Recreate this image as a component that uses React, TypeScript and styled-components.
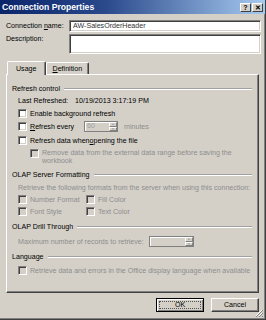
import * as React from "react";
import styled, { createGlobalStyle } from "styled-components";

const GlobalStyle = createGlobalStyle`
  html, body {
    margin: 0;
    padding: 0;
    background: #d4d0c8;
  }
  body {
    font-family: "Liberation Sans", Arial, sans-serif;
    font-size: 7.1px;
    color: #000;
  }
`;

const SWindow = styled.div`
  width: 266px;
  height: 320px;
  box-sizing: border-box;
  background: #d4d0c8;
  border-right: 1px solid #404040;
  border-bottom: 1px solid #404040;
  box-shadow: inset -1px -1px 0 #808080;
  display: flex;
  flex-direction: column;
  position: relative;
  overflow: hidden;
`;

const STitleBar = styled.div`
  flex: none;
  height: 14px;
  display: flex;
  align-items: center;
  justify-content: space-between;
  padding: 0 2px 0 2px;
  background: linear-gradient(to right, #0a246a 0%, #2a4a8c 40%, #a6caf0 100%);
  color: #fff;
  font-family: "Liberation Sans", Arial, sans-serif;
  font-weight: bold;
  font-size: 8.6px;
`;

const STitleButtons = styled.div`
  display: flex;
  gap: 1px;
`;

const STitleButton = styled.div`
  width: 11px;
  height: 9px;
  box-sizing: border-box;
  background: #d4d0c8;
  border-top: 1px solid #fff;
  border-left: 1px solid #fff;
  border-right: 1px solid #404040;
  border-bottom: 1px solid #404040;
  display: flex;
  align-items: center;
  justify-content: center;
  color: #000;
  font-size: 7px;
  line-height: 1;
`;

const SBody = styled.div`
  flex: 1;
  display: flex;
  flex-direction: column;
  padding: 6px 4px 0 6px;
`;

const SFieldRow = styled.div<{ $tall?: boolean }>`
  flex: none;
  display: grid;
  grid-template-columns: 63px 1fr;
  align-items: ${({ $tall }) => ($tall ? "start" : "center")};
  margin-bottom: 2px;
`;

const SLabel = styled.span`
  white-space: nowrap;
  line-height: 9px;
  padding-top: 1px;
`;

const SInput = styled.div<{ $height: number }>`
  height: ${({ $height }) => $height}px;
  box-sizing: border-box;
  background: #fff;
  border-top: 1px solid #808080;
  border-left: 1px solid #808080;
  border-right: 1px solid #fff;
  border-bottom: 1px solid #fff;
  box-shadow: inset 1px 1px 0 #404040, inset -1px -1px 0 #d4d0c8;
  padding: 2px 3px;
  line-height: 7px;
  white-space: nowrap;
  overflow: hidden;
  color: #333;
`;

const STabs = styled.div`
  flex: none;
  display: flex;
  align-items: flex-end;
  margin-top: 5px;
  padding-left: 1px;
  height: 13px;
  position: relative;
  z-index: 1;
`;

const STab = styled.div<{ $active?: boolean }>`
  box-sizing: border-box;
  height: ${({ $active }) => ($active ? 14 : 12)}px;
  padding: 0 ${({ $active }) => ($active ? 8 : 6)}px;
  margin-bottom: ${({ $active }) => ($active ? -1 : 0)}px;
  background: #d4d0c8;
  border-top: 1px solid #fff;
  border-left: 1px solid #fff;
  border-right: 1px solid #404040;
  box-shadow: inset -1px 0 0 #808080;
  border-radius: 2px 2px 0 0;
  display: flex;
  align-items: center;
`;

const SPanel = styled.div`
  flex: none;
  height: 219px;
  box-sizing: border-box;
  margin-right: 2px;
  border-top: 1px solid #fff;
  border-left: 1px solid #fff;
  border-right: 1px solid #404040;
  border-bottom: 1px solid #404040;
  box-shadow: inset -1px -1px 0 #808080;
  padding: 9px 5px 0 5px;
  display: flex;
  flex-direction: column;
`;

const SGroupHeader = styled.div<{ $gap?: number }>`
  display: flex;
  align-items: center;
  gap: 4px;
  margin-top: ${({ $gap }) => $gap ?? 0}px;
  height: 10px;
  white-space: nowrap;
`;

const SEtch = styled.div`
  flex: 1;
  height: 0;
  border-top: 1px solid #a0a0a0;
  border-bottom: 1px solid #fff;
  margin-right: 1px;
`;

const SGroupBody = styled.div`
  padding-left: 6px;
  display: flex;
  flex-direction: column;
`;

const SRow = styled.div<{ $indent?: number; $gap?: number; $disabled?: boolean; $top?: boolean }>`
  display: flex;
  align-items: ${({ $top }) => ($top ? "flex-start" : "center")};
  min-height: 9px;
  margin-top: ${({ $gap }) => $gap ?? 0}px;
  padding-left: ${({ $indent }) => $indent ?? 0}px;
  white-space: nowrap;
  color: ${({ $disabled }) => ($disabled ? "#8d8d8d" : "#000")};
`;

const SCheck = styled.span<{ $disabled?: boolean }>`
  flex: none;
  width: 9px;
  height: 9px;
  box-sizing: border-box;
  margin-right: 3px;
  background: ${({ $disabled }) => ($disabled ? "#d4d0c8" : "#fff")};
  border-top: 1px solid #808080;
  border-left: 1px solid #808080;
  border-right: 1px solid #fff;
  border-bottom: 1px solid #fff;
  box-shadow: inset 1px 1px 0 #404040, inset -1px -1px 0 #d4d0c8;
`;

const SWrapText = styled.div`
  line-height: 8px;
  white-space: normal;
`;

const SValue = styled.span<{ $left: number }>`
  margin-left: ${({ $left }) => $left}px;
`;

const SFixed = styled.span<{ $width: number }>`
  width: ${({ $width }) => $width}px;
`;

const SDimText = styled.span`
  color: #8d8d8d;
`;

const SSpinner = styled.div<{ $width: number }>`
  width: ${({ $width }) => $width}px;
  height: 11px;
  box-sizing: border-box;
  display: flex;
  background: #d4d0c8;
  border: 1px solid #808080;
  box-shadow: inset 1px 1px 0 #fff;
  color: #a0a0a0;
  margin: 0 6px 0 0;
`;

const SSpinText = styled.div`
  flex: 1;
  padding-left: 2px;
  line-height: 9px;
`;

const SSpinButtons = styled.div`
  width: 8px;
  display: flex;
  flex-direction: column;
`;

const SSpinButton = styled.div`
  flex: 1;
  box-sizing: border-box;
  background: #d4d0c8;
  border-top: 1px solid #fff;
  border-left: 1px solid #fff;
  border-right: 1px solid #808080;
  border-bottom: 1px solid #808080;
  display: flex;
  align-items: center;
  justify-content: center;
`;

const SArrow = styled.span<{ $up?: boolean }>`
  width: 0;
  height: 0;
  border-left: 1.5px solid transparent;
  border-right: 1.5px solid transparent;
  ${({ $up }) => ($up ? "border-bottom: 2px solid #a0a0a0;" : "border-top: 2px solid #a0a0a0;")}
`;

const SCheckGrid = styled.div`
  display: grid;
  grid-template-columns: 68px auto;
  row-gap: 3px;
  margin-top: 3px;
`;

const SFooter = styled.div`
  flex: none;
  display: flex;
  justify-content: flex-end;
  gap: 7px;
  padding: 5px 2px 0 0;
`;

const SButton = styled.div<{ $default?: boolean }>`
  width: 48px;
  height: 14px;
  box-sizing: border-box;
  display: flex;
  align-items: center;
  justify-content: center;
  background: #d4d0c8;
  border: 1px solid ${({ $default }) => ($default ? "#000" : "#fff")};
  border-right-color: #404040;
  border-bottom-color: #404040;
  ${({ $default }) => ($default ? "border-color: #000;" : "")}
  box-shadow: ${({ $default }) =>
    $default
      ? "inset 1px 1px 0 #fff, inset -1px -1px 0 #808080"
      : "inset -1px -1px 0 #808080"};
  position: relative;
`;

const SFocus = styled.span`
  position: absolute;
  inset: 2px;
  border: 1px dotted #555;
`;

const SGrip = styled.svg`
  position: absolute;
  right: 2px;
  bottom: 2px;
`;

const Checkbox = ({ label, disabled }: { label: React.ReactNode; disabled?: boolean }) => (
  <SRow $disabled={disabled}>
    <SCheck $disabled={disabled} />
    {label}
  </SRow>
);

const Spinner = ({ value, width }: { value: string; width: number }) => (
  <SSpinner $width={width}>
    <SSpinText>{value}</SSpinText>
    <SSpinButtons>
      <SSpinButton>
        <SArrow $up />
      </SSpinButton>
      <SSpinButton>
        <SArrow />
      </SSpinButton>
    </SSpinButtons>
  </SSpinner>
);

const App = () => {
  return (
    <SWindow>
      <GlobalStyle />
      <STitleBar>
        <span>Connection Properties</span>
        <STitleButtons>
          <STitleButton>?</STitleButton>
          <STitleButton>✕</STitleButton>
        </STitleButtons>
      </STitleBar>
      <SBody>
        <SFieldRow>
          <SLabel>
            Connection{" "}<u>n</u>ame:
          </SLabel>
          <SInput $height={12}>AW-SalesOrderHeader</SInput>
        </SFieldRow>
        <SFieldRow $tall>
          <SLabel>Description:</SLabel>
          <SInput $height={20} />
        </SFieldRow>

        <STabs>
          <STab $active>Usage</STab>
          <STab>
            <span>
              <u>D</u>efinition
            </span>
          </STab>
        </STabs>
        <SPanel>
          <SGroupHeader>
            Refresh control
            <SEtch />
          </SGroupHeader>
          <SGroupBody>
            <SRow $gap={2}>
              Last Refreshed:
              <SValue $left={7}>10/19/2013 3:17:19 PM</SValue>
            </SRow>
            <SRow $gap={4}>
              <SCheck />
              Enable back<u>g</u>round refresh
            </SRow>
            <SRow $gap={3}>
              <SCheck />
              <SFixed $width={54}>
                <u>R</u>efresh every
              </SFixed>
              <Spinner value="60" width={34} />
              <SDimText>minutes</SDimText>
            </SRow>
            <SRow $gap={4}>
              <SCheck />
              Refresh data when{" "}<u>o</u>pening the file
            </SRow>
            <SRow $gap={4} $indent={12} $disabled $top>
              <SCheck $disabled />
              <SWrapText>
                Remove data from the external data range before saving the workbook
              </SWrapText>
            </SRow>
          </SGroupBody>

          <SGroupHeader $gap={5}>
            OLAP Server Formatting
            <SEtch />
          </SGroupHeader>
          <SGroupBody>
            <SRow $gap={3} $disabled>
              Retrieve the following formats from the server when using this connection:
            </SRow>
            <SCheckGrid>
              <Checkbox label="Number Format" disabled />
              <Checkbox label="Fill Color" disabled />
              <Checkbox label="Font Style" disabled />
              <Checkbox label="Text Color" disabled />
            </SCheckGrid>
          </SGroupBody>

          <SGroupHeader $gap={6}>
            OLAP Drill Through
            <SEtch />
          </SGroupHeader>
          <SGroupBody>
            <SRow $gap={4} $disabled>
              <SFixed $width={131}>Maximum number of records to retrieve:</SFixed>
              <Spinner value="" width={45} />
            </SRow>
          </SGroupBody>

          <SGroupHeader $gap={5}>
            Language
            <SEtch />
          </SGroupHeader>
          <SGroupBody>
            <SRow $gap={4} $disabled>
              <SCheck $disabled />
              Retrieve data and errors in the Office display language when available
            </SRow>
          </SGroupBody>
        </SPanel>

        <SFooter>
          <SButton $default>
            OK
            <SFocus />
          </SButton>
          <SButton>Cancel</SButton>
        </SFooter>
      </SBody>
      <SGrip width="8" height="8" viewBox="0 0 8 8">
        <path d="M7 1 L1 7 M7 4 L4 7" stroke="#fff" strokeWidth="1" />
        <path d="M8 1 L1 8 M8 4 L4 8 M8 7 L7 8" stroke="#808080" strokeWidth="1" />
      </SGrip>
    </SWindow>
  );
};

export default App;
